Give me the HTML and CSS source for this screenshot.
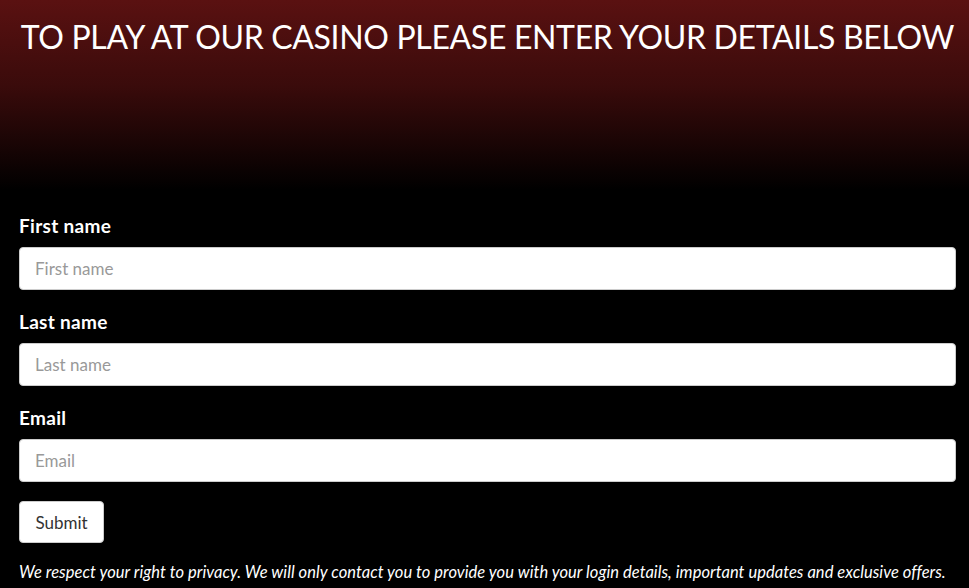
FILE: index.html
```html
<!DOCTYPE html>
<html lang="en">
<head>
<meta charset="utf-8">
<title>Casino sign up</title>
<link rel="stylesheet" href="styles.css">
</head>
<body>
<header class="hero">
  <h1 class="hero-title">TO PLAY AT OUR CASINO PLEASE ENTER YOUR DETAILS BELOW</h1>
</header>
<form class="signup">
  <div class="field">
    <label class="field-label" for="fn">First name</label>
    <input class="field-input" id="fn" type="text" placeholder="First name">
  </div>
  <div class="field">
    <label class="field-label" for="ln">Last name</label>
    <input class="field-input" id="ln" type="text" placeholder="Last name">
  </div>
  <div class="field">
    <label class="field-label" for="em">Email</label>
    <input class="field-input" id="em" type="email" placeholder="Email">
  </div>
  <button class="submit" type="button">Submit</button>
  <p class="privacy">We respect your right to privacy. We will only contact you to provide you with your login details, important updates and exclusive offers.</p>
</form>
</body>
</html>
```
FILE: styles.css
```css
html, body {
  margin: 0;
  padding: 0;
  background: #000;
}
body {
  font-family: Lato, "Liberation Sans", sans-serif;
  color: #fff;
  overflow: hidden;
}
.hero {
  height: 190px;
  box-sizing: border-box;
  padding-top: 17px;
  background: linear-gradient(to bottom, #5a1111 0%, #3a0b0b 45%, #000 100%);
}
.hero-title {
  margin: 0;
  font-weight: 400;
  font-size: 32px;
  line-height: 40px;
  letter-spacing: -0.34px;
  white-space: nowrap;
  text-align: center;
  color: #fff;
  padding-left: 6px;
}
.signup {
  display: flex;
  flex-direction: column;
  align-items: flex-start;
  padding: 24px 13px 0 19px;
}
.field {
  display: flex;
  flex-direction: column;
  align-self: stretch;
  margin-bottom: 20px;
}
.field-label {
  font-weight: 700;
  font-size: 19px;
  line-height: 24px;
  letter-spacing: 0.3px;
  margin-bottom: 9px;
}
.field-input {
  height: 43px;
  box-sizing: border-box;
  border: 1px solid #ccc;
  border-radius: 4px;
  background: #fff;
  padding: 0 15px;
  font-family: Lato, "Liberation Sans", sans-serif;
  font-size: 17px;
  color: #333;
  outline: none;
}
.field-input::placeholder {
  color: #999;
}
.field:last-of-type {
  margin-bottom: 19px;
}
.submit {
  height: 42px;
  width: 85px;
  box-sizing: border-box;
  border: 1px solid #ccc;
  border-radius: 4px;
  background: #fff;
  color: #333;
  font-family: Lato, "Liberation Sans", sans-serif;
  font-size: 17px;
  padding: 0;
}
.privacy {
  margin: 17px 0 0;
  font-style: italic;
  font-size: 16.5px;
  line-height: 24px;
  letter-spacing: 0.045px;
  white-space: nowrap;
}
```
